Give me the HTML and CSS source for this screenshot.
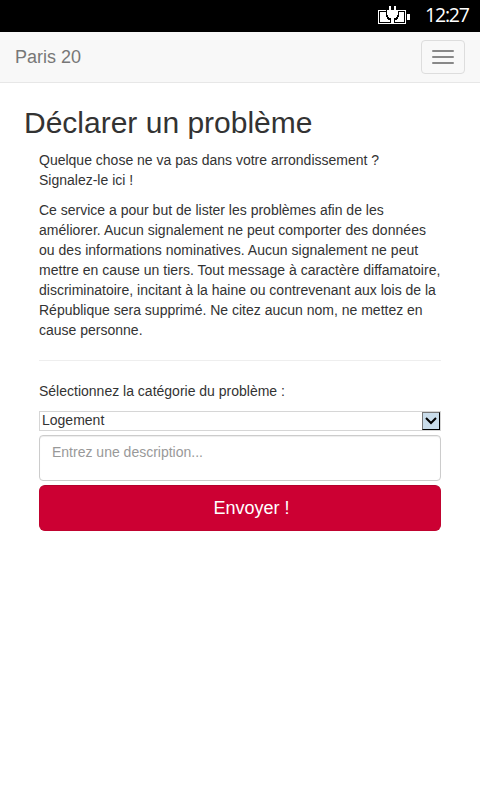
FILE: index.html
```html
<!DOCTYPE html>
<html lang="fr">
<head>
<meta charset="utf-8">
<title>Paris 20</title>
<link rel="stylesheet" href="styles.css">
</head>
<body>
<div class="status">
<svg class="battery" width="32" height="18" viewBox="0 0 32 18" shape-rendering="crispEdges"><path d="M0 4h8v1H1v12h12v1H0zM20 4h8v14H15v-1h12V5h-7zM29 8h3v6h-3z" fill="#fff"/><path d="M2 6h6v5h1v1h1v1h2v3H2zM20 6h6v10H16v-3h2v-1h1v-1h1z" fill="#fff"/><path d="M11 0h2v4h3V0h2v4h2v5h-1v2h-1v1h-2v6h-3v-6h-2v-1h-1V9H9V4h2z" fill="#fff"/><path d="M8.500 5v5h1v2h1v1h2v4M20.500 5v5h-1v2h-1v1h-2v4" fill="none" stroke="#000"/></svg>
<span class="clock">12:27</span>
</div>
<header class="navbar">
<span class="brand">Paris 20</span>
<button class="toggle" aria-label="Menu"><i></i><i></i><i></i></button>
</header>
<main>
<h1>Déclarer un problème</h1>
<div class="content">
<p>Quelque chose ne va pas dans votre arrondissement ?<br>Signalez-le ici !</p>
<p>Ce service a pour but de lister les problèmes afin de les<br><span class="loose">améliorer. Aucun signalement ne peut comporter des données</span><br><span class="loose">ou des informations nominatives. Aucun signalement ne peut</span><br><span class="loose">mettre en cause un tiers. Tout message à caractère diffamatoire,</span><br>discriminatoire, incitant à la haine ou contrevenant aux lois de la<br>République sera supprimé. Ne citez aucun nom, ne mettez en<br>cause personne.</p>
<hr>
<p>Sélectionnez la catégorie du problème :</p>
<div class="select"><span>Logement</span><div class="arrow"><svg width="12" height="8" viewBox="0 0 12 8"><path d="M1 1l5 5 5-5" fill="none" stroke="#000" stroke-width="2"/></svg></div></div>
<div class="description">Entrez une description...</div>
<button class="submit">Envoyer !</button>
</div>
</main>
</body>
</html>
```
FILE: styles.css
```css
* { box-sizing: border-box; }
body { margin: 0; background: #fff; color: #333; font: 14px/20px "Liberation Sans", Arial, sans-serif; height: 800px; overflow: hidden; }
.status { height: 32px; background: #000; color: #fff; display: flex; justify-content: flex-end; padding-right: 11px; }
.battery { margin: 6px 15px 0 0; }
.clock { width: 44px; font: 400 19.5px/30px "Open Sans", sans-serif; letter-spacing: -1.2px; white-space: nowrap; }
.navbar { height: 51px; background: #f8f8f8; border-bottom: 1px solid #e7e7e7; display: flex; justify-content: space-between; padding: 8px 15px; }
.brand { font-size: 18px; line-height: 34px; color: #777; }
.toggle { width: 44px; height: 34px; border: 1px solid #ddd; border-radius: 4px; background: transparent; padding: 0 10px; display: flex; flex-direction: column; justify-content: center; gap: 4px; }
.toggle i { display: block; width: 22px; height: 2px; border-radius: 1px; background: #888; }
main { padding: 23px 39px 0; }
h1 { margin: 0 0 10px -15px; font-size: 30px; line-height: 34px; font-weight: 400; white-space: nowrap; }
p { margin: 0 0 10px; white-space: nowrap; }
.loose { letter-spacing: .03px; }
hr { margin: 20px 0; border: 0; border-top: 1px solid #eee; }
.select { height: 20px; border: 1px solid #d6d6d6; display: flex; justify-content: space-between; padding-left: 2px; line-height: 16px; }
.arrow { width: 18px; border: 1px solid #000; border-color: #777 #000 #000 #777; background: #c9dcea; display: flex; align-items: center; justify-content: center; }
.description { height: 46px; margin-top: 4px; border: 1px solid #ccc; border-radius: 4px; padding: 6px 12px; color: #999; box-shadow: inset 0 1px 1px rgba(0,0,0,.075); }
.submit { display: block; width: 100%; height: 46px; margin-top: 4px; border: 1px solid #b3002d; border-color: #b3002d #c0032f #c0032f; border-radius: 6px; background: #cc0033; color: #fff; font: 18px/24px "Liberation Sans", Arial, sans-serif; padding: 0 0 0 23px; }
```
